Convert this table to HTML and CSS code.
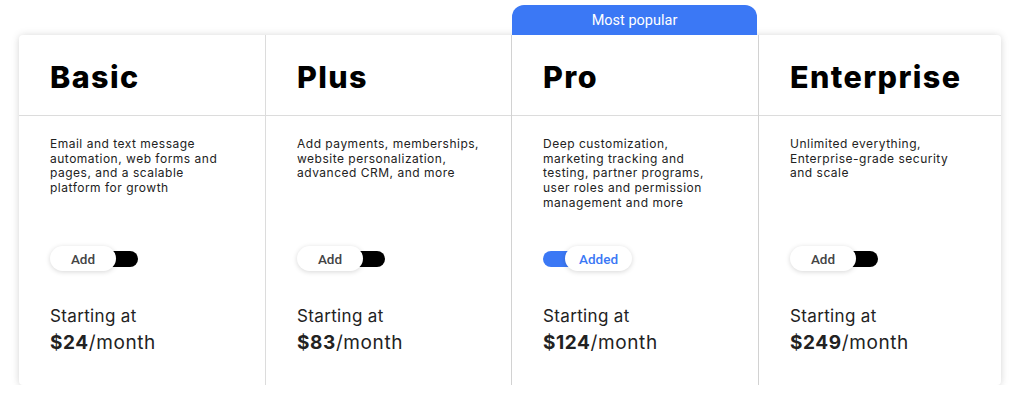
FILE: index.html
```html
<!DOCTYPE html>
<html>
<head>
<meta charset="utf-8">
<link rel="stylesheet" href="styles.css">
</head>
<body>
<div class="wrap">
  <div class="tabs">
    <div class="tab-spacer"></div>
    <div class="tab-spacer"></div>
    <div class="tab">Most popular</div>
    <div class="tab-spacer"></div>
  </div>
  <div class="card">
    <div class="col">
      <div class="head"><h2>Basic</h2></div>
      <div class="body">
        <p class="desc">Email and text message<br>automation, web forms and<br>pages, and a scalable<br>platform for growth</p>
        <div class="toggle off"><span class="pill">Add</span><span class="knob"></span></div>
        <div class="start">Starting at</div>
        <div class="price"><b>$24</b>/month</div>
      </div>
    </div>
    <div class="col">
      <div class="head"><h2>Plus</h2></div>
      <div class="body">
        <p class="desc">Add payments, memberships,<br>website personalization,<br>advanced CRM, and more</p>
        <div class="toggle off"><span class="pill">Add</span><span class="knob"></span></div>
        <div class="start">Starting at</div>
        <div class="price"><b>$83</b>/month</div>
      </div>
    </div>
    <div class="col pro">
      <div class="head"><h2>Pro</h2></div>
      <div class="body">
        <p class="desc">Deep customization,<br>marketing tracking and<br>testing, partner programs,<br>user roles and permission<br>management and more</p>
        <div class="toggle on"><span class="knob"></span><span class="pill">Added</span></div>
        <div class="start">Starting at</div>
        <div class="price"><b>$124</b>/month</div>
      </div>
    </div>
    <div class="col">
      <div class="head"><h2>Enterprise</h2></div>
      <div class="body">
        <p class="desc">Unlimited everything,<br>Enterprise-grade security<br>and scale</p>
        <div class="toggle off"><span class="pill">Add</span><span class="knob"></span></div>
        <div class="start">Starting at</div>
        <div class="price"><b>$249</b>/month</div>
      </div>
    </div>
  </div>
</div>
</body>
</html>
```

FILE: styles.css
```css
* { box-sizing: border-box; }
html, body { margin: 0; padding: 0; background: #fff; }
body { font-family: Inter, "Open Sans", sans-serif; color: #222; }
.wrap { padding: 5px 0 0 19px; width: 1001px; }
.tabs { display: grid; grid-template-columns: 246px 246px 247px 1fr; height: 30px; }
.tab {
  background: #3b78f5;
  color: #fff;
  font-family: Roboto, sans-serif;
  font-size: 14.5px;
  border-radius: 12px 12px 0 0;
  display: flex; align-items: center; justify-content: center;
  margin-left: 1px;
  margin-right: 1px;
}
.card {
  display: grid;
  grid-template-columns: 246px 246px 247px 1fr;
  background: #fff;
  border-radius: 4px;
  box-shadow: 0 0 8px rgba(0,0,0,0.12), 0 2px 6px rgba(0,0,0,0.06);
  height: 350px;
}
.col { border-left: 1px solid #dcdcdc; display: flex; flex-direction: column; }
.col:first-child { border-left: none; }
.col:nth-child(3), .col:nth-child(4) { border-left-color: #d2d2d2; }
.head {
  height: 81px;
  border-bottom: 1px solid #dcdcdc;
  display: flex; align-items: center;
  padding-left: 31px;
}
.head h2 {
  margin: 0;
  font-family: Inter, sans-serif;
  font-weight: 800;
  font-size: 30.5px;
  color: #000;
  letter-spacing: 1.4px;
  padding-top: 3px;
}
.body { padding: 21px 20px 0 31px; display: flex; flex-direction: column; }
.desc {
  margin: 0;
  font-size: 12px;
  line-height: 14.7px;
  height: 109px;
  color: #222;
  letter-spacing: 0.5px;
  white-space: nowrap;
}
.toggle { display: flex; align-items: center; height: 25px; }
.pill {
  background: #fff;
  height: 25px;
  width: 66px;
  border-radius: 13px;
  display: flex; align-items: center; justify-content: center;
  font-family: Roboto, sans-serif;
  font-size: 13.5px;
  font-weight: 500;
  color: #444;
  box-shadow: 0 1px 5px rgba(0,0,0,0.16);
  position: relative;
  z-index: 1;
}
.knob {
  height: 16px;
  width: 26px;
  background: #000;
  border-radius: 0 8px 8px 0;
  margin-left: -4px;
}
.on .knob {
  background: #3b78f5;
  border-radius: 8px 0 0 8px;
  margin-left: 0;
  margin-right: -6px;
  width: 28px;
}
.on .pill { color: #3b78f5; width: 67px; }
.start { margin-top: 35px; font-size: 17px; color: #222; line-height: 20px; letter-spacing: 0.35px; }
.price { margin-top: 5px; font-size: 19px; color: #222; line-height: 24px; letter-spacing: 0.6px; }
.price b { font-weight: 700; }
```
